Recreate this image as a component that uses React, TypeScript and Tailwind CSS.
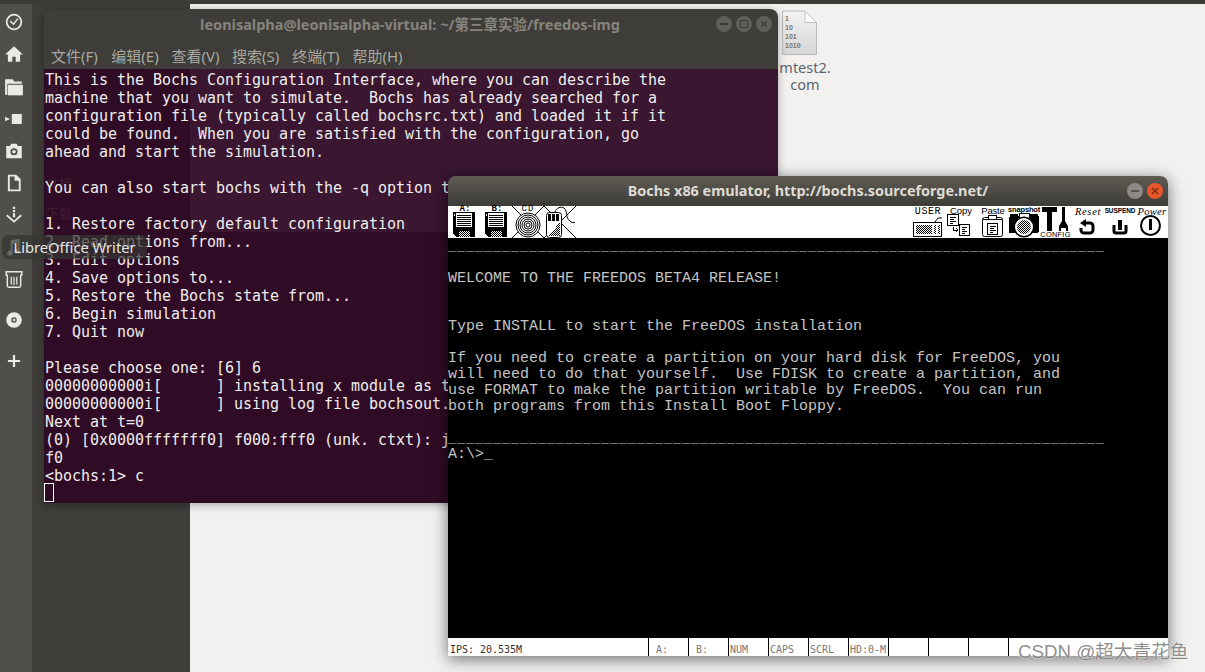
import React from "react";

const termLines = [
  "This is the Bochs Configuration Interface, where you can describe the",
  "machine that you want to simulate.  Bochs has already searched for a",
  "configuration file (typically called bochsrc.txt) and loaded it if it",
  "could be found.  When you are satisfied with the configuration, go",
  "ahead and start the simulation.",
  "",
  "You can also start bochs with the -q option t",
  "",
  "1. Restore factory default configuration",
  "2. Read options from...",
  "3. Edit options",
  "4. Save options to...",
  "5. Restore the Bochs state from...",
  "6. Begin simulation",
  "7. Quit now",
  "",
  "Please choose one: [6] 6",
  "00000000000i[      ] installing x module as t",
  "00000000000i[      ] using log file bochsout.",
  "Next at t=0",
  "(0) [0x0000fffffff0] f000:fff0 (unk. ctxt): j",
  "f0",
  "<bochs:1> c",
];

const dash = "_".repeat(73);
const dosLines = [
  dash,
  "",
  "WELCOME TO THE FREEDOS BETA4 RELEASE!",
  "",
  "",
  "Type INSTALL to start the FreeDOS installation",
  "",
  "If you need to create a partition on your hard disk for FreeDOS, you",
  "will need to do that yourself.  Use FDISK to create a partition, and",
  "use FORMAT to make the partition writable by FreeDOS.  You can run",
  "both programs from this Install Boot Floppy.",
  "",
  dash,
  "A:\\>_",
];

const Dither = ({ id }: { id: string }) => (
  <defs>
    <pattern id={id} width="2" height="2" patternUnits="userSpaceOnUse">
      <rect width="2" height="2" fill="#fff" />
      <rect width="1" height="1" fill="#000" />
      <rect x="1" y="1" width="1" height="1" fill="#000" />
    </pattern>
  </defs>
);

const Cell = ({ children, label }: { children: React.ReactNode; label?: React.ReactNode }) => (
  <div className="relative w-8 h-8 shrink-0">
    <svg viewBox="0 0 32 32" className="absolute inset-0 w-8 h-8" shapeRendering="crispEdges">
      {children}
    </svg>
    {label}
  </div>
);

const mono = "font-['Liberation_Mono',monospace]";

const Label = ({ children, className }: { children: React.ReactNode; className: string }) => (
  <span className={"absolute top-0 left-0 right-0 text-center text-black whitespace-pre leading-none " + className}>
    {children}
  </span>
);

const Floppy = ({ id }: { id: string }) => (
  <>
    <Dither id={id} />
    <path d="M5 6H27V31H8L5 28Z" fill="#000" />
    <rect x="8" y="7" width="16" height="14" fill="#fff" />
    {[9, 11, 13, 15, 17, 19].map((y) => (
      <rect key={y} x="9" y={y} width="14" height="1" fill="#000" />
    ))}
    <rect x="6" y="8" width="1" height="2" fill="#fff" />
    <rect x="11" y="25" width="11" height="6" fill={`url(#${id})`} />
  </>
);

const Cross = () => (
  <g shapeRendering="auto">
    <path d="M0 0L32 32M32 0L0 32" stroke="#000" strokeWidth="1" fill="none" />
  </g>
);

const Toolbar = () => (
  <div className="h-8 bg-white flex justify-between shrink-0">
    <div className="flex">
      <Cell label={<Label className={mono + " font-bold text-[9px] pl-[2px] -translate-y-px"}>A:</Label>}>
        <Floppy id="fa" />
      </Cell>
      <Cell label={<Label className={mono + " font-bold text-[9px] pl-[2px] -translate-y-px"}>B:</Label>}>
        <Floppy id="fb" />
      </Cell>
      <Cell label={<Label className={mono + " text-[9px] tracking-[1px] -translate-y-px"}>CD</Label>}>
        <Cross />
        <g shapeRendering="auto" fill="#fff" stroke="#000" strokeWidth="1">
          <circle cx="16" cy="19" r="12" />
          <circle cx="16" cy="19" r="10" />
          <circle cx="16" cy="19" r="8" />
          <circle cx="16" cy="19" r="6" />
          <circle cx="16" cy="19" r="4" />
          <circle cx="16" cy="19" r="2" />
        </g>
      </Cell>
      <Cell>
        <Dither id="fm" />
        <Cross />
        <rect x="2.5" y="6.5" width="15" height="25" rx="3" fill="#fff" stroke="#000" shapeRendering="auto" />
        <rect x="4" y="8" width="3" height="7" fill="#000" />
        <rect x="8" y="8" width="3" height="7" fill="#000" />
        <rect x="12" y="8" width="3" height="7" fill="#000" />
        <path d="M16 16V30H5Z" fill="url(#fm)" />
        <path d="M11 6C12 2 17 0 20 2C24 5 21 12 26 15C28 17 30 17 31 16" fill="none" stroke="#000" shapeRendering="auto" />
      </Cell>
    </div>
    <div className="flex">
      <Cell label={<Label className={mono + " text-[10px] tracking-[0.6px] pt-px"}>USER</Label>}>
        <Dither id="fk" />
        <rect x="1.5" y="16.5" width="28" height="14" fill="#fff" stroke="#000" />
        <rect x="4" y="19" width="16" height="9" fill="url(#fk)" />
        <rect x="22" y="19" width="2" height="9" fill="url(#fk)" />
        <rect x="26" y="19" width="2" height="9" fill="url(#fk)" />
        <path d="M23 16L26 12H30" fill="none" stroke="#000" shapeRendering="auto" />
      </Cell>
      <Cell label={<Label className="font-['Liberation_Sans',sans-serif] text-[9.5px] pl-[2px]">Copy</Label>}>
        <rect x="3.5" y="8.5" width="11" height="11" fill="#fff" stroke="#000" />
        <path d="M6 11h6M6 13h4M6 15h6M6 17h3" stroke="#000" />
        <rect x="15.5" y="18.5" width="10" height="11" fill="#fff" stroke="#000" />
        <path d="M18 21h5M18 23h3M18 25h5M18 27h3" stroke="#000" />
        <path d="M9 21v3h5M12 22l2 2-2 2" fill="none" stroke="#000" />
      </Cell>
      <Cell label={<Label className="font-['Liberation_Sans',sans-serif] text-[9.5px] tracking-[-0.2px] pl-[2px]">Paste</Label>}>
        <rect x="6.5" y="11.5" width="20" height="19" rx="2" fill="#fff" stroke="#000" shapeRendering="auto" />
        <path d="M7 13.5h6M20 13.5h6" stroke="#000" />
        <rect x="12.5" y="9.5" width="8" height="4" fill="#fff" stroke="#000" />
        <rect x="11.5" y="17.5" width="10" height="11" fill="#fff" stroke="#000" />
        <path d="M14 20h6M14 22h4M14 24h6M14 26h3" stroke="#000" />
      </Cell>
      <Cell label={<Label className="font-['Liberation_Sans',sans-serif] font-bold text-[7.5px] tracking-[-0.15px]">snapshot</Label>}>
        <Dither id="fs" />
        <rect x="1" y="10" width="30" height="17" rx="2" fill="#000" />
        <rect x="2" y="8" width="8" height="3" fill="#000" />
        <rect x="22" y="8" width="8" height="3" fill="#000" />
        <rect x="11" y="7" width="10" height="5" fill="#fff" stroke="#000" />
        <circle cx="16" cy="21" r="10.5" fill="#000" shapeRendering="auto" />
        <circle cx="16" cy="21" r="9" fill="#fff" shapeRendering="auto" />
        <circle cx="16" cy="21" r="7" fill="url(#fs)" shapeRendering="auto" />
      </Cell>
      <Cell label={<span className="absolute left-0 right-0 top-[25px] text-center text-black font-['Liberation_Sans',sans-serif] text-[7.5px] tracking-[0.2px] leading-none pr-[1px]">CONFIG</span>}>
        <rect x="2" y="1" width="15" height="5" fill="#000" />
        <rect x="7" y="6" width="5" height="19" fill="#000" />
        <path d="M22 1H25V15L28 20V25H26V22H21V25H19V20L22 15Z" fill="#000" shapeRendering="auto" />
      </Cell>
      <Cell label={<Label className="font-['Liberation_Serif',serif] italic text-[10.5px] tracking-[0.7px] pt-px">Reset</Label>}>
        <path d="M13 17H18A3 3 0 0 1 21 20V24A3 3 0 0 1 18 27H12A3 3 0 0 1 9 24V22" fill="none" stroke="#000" strokeWidth="3" shapeRendering="auto" />
        <path d="M8 17L14 13V21Z" fill="#000" shapeRendering="auto" />
      </Cell>
      <Cell label={<Label className="font-['Liberation_Sans',sans-serif] font-bold text-[6.5px] tracking-[-0.1px] pt-[2px]">SUSPEND</Label>}>
        <path d="M10 19V25A2 2 0 0 0 12 27H20A2 2 0 0 0 22 25V19" fill="none" stroke="#000" strokeWidth="3" shapeRendering="auto" />
        <rect x="14" y="14" width="4" height="10" fill="#000" />
      </Cell>
      <Cell label={<Label className="font-['Liberation_Serif',serif] italic text-[10.5px] tracking-[0.3px] pt-px">Power</Label>}>
        <circle cx="14.5" cy="19.5" r="9.5" fill="none" stroke="#000" strokeWidth="2" shapeRendering="auto" />
        <rect x="13" y="13" width="3" height="11" fill="#000" />
      </Cell>
    </div>
  </div>
);

const StatusCell = ({ children }: { children?: React.ReactNode }) => (
  <div className="w-10 h-full border-l border-black pl-[1px] text-[#777] shrink-0 pt-[6px]">{children}</div>
);

const Svg = ({ children }: { children: React.ReactNode }) => (
  <svg viewBox="0 0 18 18" className="w-5 h-5" fill="#e9e9e6" stroke="none">
    {children}
  </svg>
);

const launcher: { icon: React.ReactNode; gap?: boolean; shift?: boolean }[] = [
  {
    icon: (
      <Svg>
        <circle cx="9" cy="9" r="6.6" fill="none" stroke="#e9e9e6" strokeWidth="1.6" />
        <path d="M5.5 8L8.5 11L12.5 6" fill="none" stroke="#e9e9e6" strokeWidth="1.3" />
      </Svg>
    ),
  },
  {
    icon: (
      <Svg>
        <path d="M9 2L17 9.5H14.5V16H10.5V11.5H7.5V16H3.5V9.5H1Z" />
      </Svg>
    ),
  },
  {
    shift: true,
    icon: (
      <Svg>
        <path d="M1 2H8L9 4H16V6H3V16H1Z" />
        <path d="M3.5 7H17V16.5H3.5Z" />
      </Svg>
    ),
  },
  {
    icon: (
      <Svg>
        <path d="M7 4.5H16V13.5H7Z" />
        <path d="M1 7L5.5 9L1 11Z" />
      </Svg>
    ),
  },
  {
    icon: (
      <Svg>
        <path fillRule="evenodd" d="M2 4.5H5.5L6.5 2.5H11.5L12.5 4.5H16V15.5H2ZM9 6.5A3.2 3.2 0 1 0 9 12.9A3.2 3.2 0 1 0 9 6.5Z" />
        <circle cx="9" cy="9.7" r="1.6" />
      </Svg>
    ),
  },
  {
    icon: (
      <Svg>
        <path fillRule="evenodd" d="M3.5 1.5H11L15 5.5V16.5H3.5ZM5.2 3.2V14.8H13.3V7H9.5V3.2Z" />
      </Svg>
    ),
  },
  {
    icon: (
      <Svg>
        <path d="M8 1.5H10V3.5H8ZM8 4.5H10V6.5H8ZM8 7.5H10V11H8Z" />
        <path d="M3 8.5L9 14L15 8.5L16 10L9 16L2 10Z" />
      </Svg>
    ),
  },
  {
    icon: (
      <Svg>
        <path d="M6 3L14 1.5V12.5A2.4 2.2 0 1 1 12.3 10.5V5L7.7 6V14.5A2.4 2.2 0 1 1 6 12.5Z" />
      </Svg>
    ),
  },
  {
    icon: (
      <Svg>
        <path d="M2 2.5H16V5.5H15V15A1.5 1.5 0 0 1 13.5 16.5H4.5A1.5 1.5 0 0 1 3 15V5.5H2Z" fill="none" stroke="#e9e9e6" strokeWidth="1.3" />
        <path d="M6.5 7V14M9 7V14.5M11.5 7V14" stroke="#e9e9e6" strokeWidth="1.1" />
      </Svg>
    ),
  },
  {
    gap: true,
    icon: (
      <Svg>
        <path fillRule="evenodd" d="M9 2A7 7 0 1 0 9 16A7 7 0 1 0 9 2ZM9 6.5A2.5 2.5 0 1 1 9 11.5A2.5 2.5 0 1 1 9 6.5Z" />
        <circle cx="9" cy="9" r="1.2" />
      </Svg>
    ),
  },
  {
    gap: true,
    icon: (
      <Svg>
        <path d="M8 3.5H10V8H14.5V10H10V14.5H8V10H3.5V8H8Z" />
      </Svg>
    ),
  },
];

const ghost = [
  { t: "桌面", c: "top-[13px]" },
  { t: "视频", c: "top-[43px]" },
  { t: "文档", c: "top-[105px]" },
  { t: "下载", c: "top-[135px]" },
];

const WinBtn = ({ children }: { children: React.ReactNode }) => (
  <div className="w-4 h-4 rounded-full bg-[#5f5e59] flex items-center justify-center">{children}</div>
);

export default function App() {
  return (
    <div className="relative w-[1205px] h-[672px] overflow-hidden bg-[#f2f1f0] flex flex-col font-['Noto_Sans','Noto_Sans_CJK_SC',sans-serif]">
      <div className="h-1 bg-[#3c3b37] shrink-0" />
      <div className="flex flex-1 min-h-0">
        <div className="w-8 bg-[#50504a] shrink-0 flex flex-col pt-[2px] pr-1">
          {launcher.map((l, i) => (
            <div
              key={i}
              className={"h-8 shrink-0 flex items-center justify-center " + (l.gap ? "mt-[9px]" : l.shift ? "mt-px" : "")}
            >
              {l.icon}
            </div>
          ))}
        </div>
        <div className="w-[158px] bg-[#3e3d39] shrink-0" />
        <div className="flex-1" />
      </div>

      {/* desktop file */}
      <div className="absolute left-[775px] top-[10px] w-[60px] flex flex-col items-center">
        <svg viewBox="0 0 38 46" className="w-[38px] h-[46px] self-start ml-[5px]">
          <defs>
            <linearGradient id="doc" x1="0" y1="0" x2="0" y2="1">
              <stop offset="0" stopColor="#f2f2f2" />
              <stop offset="1" stopColor="#d6d6d6" />
            </linearGradient>
          </defs>
          <path d="M2.5 1H25L36.5 12.5V44.5H2.5Z" fill="url(#doc)" stroke="#b9b9b9" />
          <path d="M25 1V12.5H36.5Z" fill="#fff" stroke="#c4c4c4" />
          <text x="5" y="11" fontSize="7" fontWeight="700" fill="#777" fontFamily="Liberation Sans">1</text>
          <text x="5" y="20" fontSize="7" fontWeight="700" fill="#777" fontFamily="Liberation Sans">10</text>
          <text x="5" y="29" fontSize="7" fontWeight="700" fill="#777" fontFamily="Liberation Sans">101</text>
          <text x="5" y="38" fontSize="7" fontWeight="700" fill="#777" fontFamily="Liberation Sans">1010</text>
        </svg>
        <div className="mt-[3px] text-[14.5px] leading-[17px] text-[#5c6470] text-center">
          mtest2.
          <br />
          com
        </div>
      </div>

      {/* terminal */}
      <div className="absolute left-[44px] top-[9px] w-[734px] h-[494px] rounded-t-lg flex flex-col overflow-hidden shadow-[0_2px_8px_rgba(0,0,0,0.3)]">
        <div className="h-[60px] shrink-0 bg-[#3e3d39] relative">
          <div className="h-[28px] flex items-center justify-center text-[14.5px] font-bold text-[#86847d] pr-[2px] pt-[4px] whitespace-pre">
            leonisalpha@leonisalpha-virtual: ~/第三章实验/freedos-img
          </div>
          <div className="flex pl-[7px] h-[31px] pt-[7px] items-center text-[15px] text-[#a9a79f]">
            {["文件(F)", "编辑(E)", "查看(V)", "搜索(S)", "终端(T)", "帮助(H)"].map((m) => (
              <span key={m} className="w-[60.3px] shrink-0 whitespace-pre">
                {m}
              </span>
            ))}
          </div>
          <div className="absolute right-[6px] top-[7px] flex gap-1">
            <WinBtn>
              <div className="w-2 h-[2px] bg-[#3e3d39]" />
            </WinBtn>
            <WinBtn>
              <div className="w-2 h-2 border border-[#3e3d39]" />
            </WinBtn>
            <WinBtn>
              <svg viewBox="0 0 8 8" className="w-2 h-2">
                <path d="M1 1L7 7M7 1L1 7" stroke="#3e3d39" strokeWidth="1.3" />
              </svg>
            </WinBtn>
          </div>
        </div>
        <div className="relative flex-1 bg-[#300b25] pt-[2px] pl-px text-[15px] leading-[18px] tracking-[-0.03px] text-[#eeeeec] font-['DejaVu_Sans_Mono',monospace]">
          <div className="absolute left-[146px] right-0 top-0 h-[163px] bg-[#3a1631]" />
          {ghost.map((g) => (
            <div key={g.t} className={"absolute left-[2px] text-[13px] text-[#421d39] font-['Noto_Sans_CJK_SC',sans-serif] " + g.c}>
              {g.t}
            </div>
          ))}
          <div className="relative whitespace-pre">
            {termLines.map((l, i) => (
              <div key={i} className="h-[18px]">
                {l}
              </div>
            ))}
            <div className="w-[10px] h-[19px] border border-white -mt-[2px] -ml-[1px]" />
          </div>
        </div>
      </div>

      {/* tooltip */}
      <div className="absolute left-[2px] top-[235px] w-[145px] h-[24px] rounded-md bg-[rgba(52,52,50,0.72)] flex items-center justify-center text-[14.7px] text-[#e8e8e4] whitespace-pre">
        LibreOffice Writer
      </div>

      {/* bochs */}
      <div className="absolute left-[448px] top-[176px] w-[720px] h-[480px] rounded-t-lg flex flex-col shadow-[0_3px_16px_rgba(0,0,0,0.55)]">
        <div className="relative h-[30px] shrink-0 rounded-t-lg bg-gradient-to-b from-[#5f5c54] to-[#3c3b37] flex items-center justify-center text-[14.4px] font-bold text-[#dfdbd2] whitespace-pre">
          Bochs x86 emulator, http://bochs.sourceforge.net/
          <div className="absolute right-[5px] top-[7px] flex gap-1">
            <div className="w-4 h-4 rounded-full bg-[#8c8a82] flex items-center justify-center">
              <div className="w-2 h-[2px] bg-[#56544e]" />
            </div>
            <div className="w-4 h-4 rounded-full bg-[#e8562b] flex items-center justify-center">
              <svg viewBox="0 0 8 8" className="w-2 h-2">
                <path d="M1 1L7 7M7 1L1 7" stroke="#7a2b14" strokeWidth="1.4" />
              </svg>
            </div>
          </div>
        </div>
        <Toolbar />
        <div className="h-[400px] shrink-0 bg-black text-[#c4c4c4] font-['Liberation_Mono',monospace] text-[15px] leading-4 whitespace-pre pt-px">
          {dosLines.map((l, i) => (
            <div key={i} className="h-4">
              {l === dash ? <span className="text-[13px] tracking-[1.2px]">{l}</span> : l}
            </div>
          ))}
        </div>
        <div className="h-[18px] shrink-0 bg-white flex font-['DejaVu_Sans_Mono',monospace] text-[10px] leading-3 tracking-[-0.02px]">
          <div className="w-[200px] shrink-0 pl-[2px] pt-[6px] text-[#333]">IPS: 20.535M</div>
          <StatusCell>&nbsp;A:</StatusCell>
          <StatusCell>&nbsp;B:</StatusCell>
          <StatusCell>NUM</StatusCell>
          <StatusCell>CAPS</StatusCell>
          <StatusCell>SCRL</StatusCell>
          <StatusCell>HD:0-M</StatusCell>
          <StatusCell />
          <StatusCell />
          <StatusCell />
          <StatusCell />
        </div>
      </div>

      {/* watermark */}
      <div className="absolute left-[1018px] top-[640px] text-[18.7px] leading-6 text-[rgba(120,120,120,0.85)] [text-shadow:0_0_2px_#fff] font-['Liberation_Sans','Noto_Sans_CJK_SC',sans-serif] whitespace-pre">
        CSDN @超大青花鱼
      </div>
    </div>
  );
}
